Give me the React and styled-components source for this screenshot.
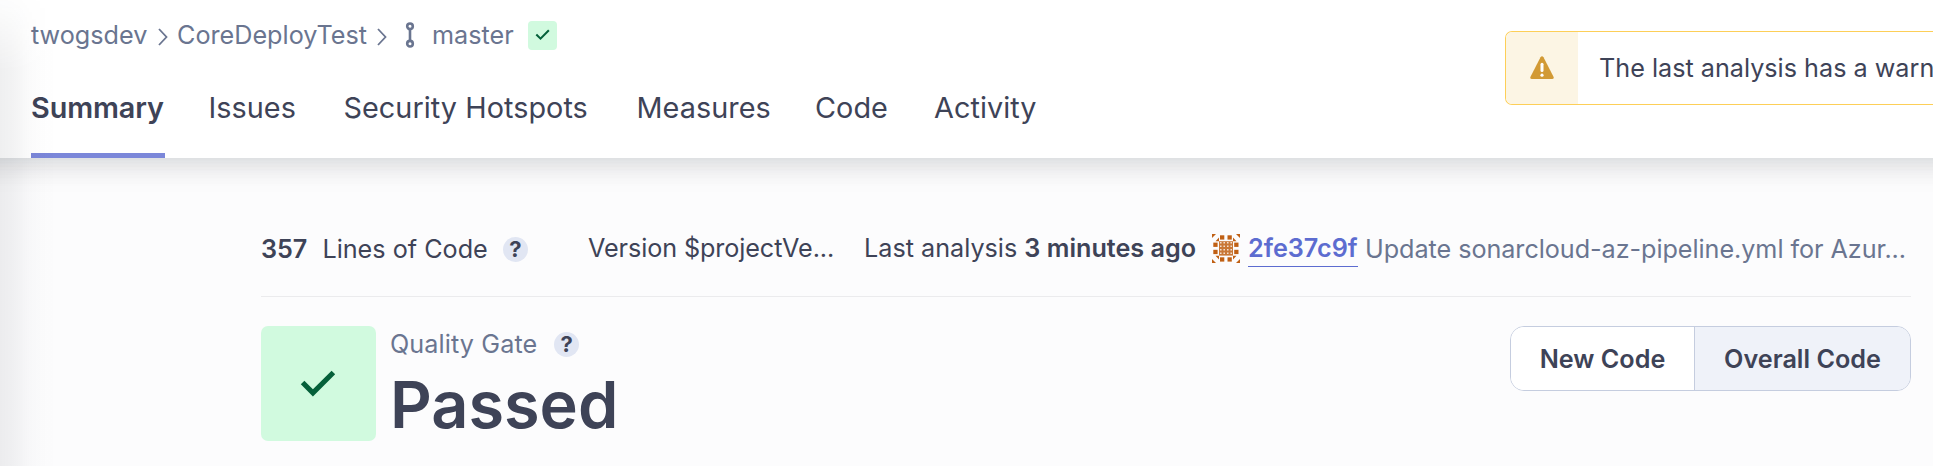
import React from 'react';
import styled, { createGlobalStyle } from 'styled-components';

const GlobalStyle = createGlobalStyle`
  *, *::before, *::after { box-sizing: border-box; }
  body {
    margin: 0;
    overflow: hidden;
    background: #fcfcfd;
    color: #3e4357;
    font-family: Inter, "Liberation Sans", sans-serif;
    font-size: 25.2px;
    font-weight: 370;
    line-height: 36px;
  }
`;

const Page = styled.div`
  position: relative;
  display: flex;
  flex-direction: column;
  width: 100%;
  height: 466px;
  overflow: hidden;
`;

const SidebarShadow = styled.div`
  position: absolute;
  top: 0;
  bottom: 0;
  left: 0;
  width: 60px;
  pointer-events: none;
  background: linear-gradient(to right, rgba(29, 33, 47, 0.07), rgba(29, 33, 47, 0.055) 22%, rgba(29, 33, 47, 0.02) 50%, rgba(29, 33, 47, 0.005) 78%, transparent);
  mask-image: linear-gradient(to bottom, rgba(0, 0, 0, 0.15), #000 70px);
`;

const Header = styled.header`
  position: relative;
  display: flex;
  justify-content: space-between;
  height: 158px;
  flex: none;
  margin: 0 -60px;
  padding: 0 60px 0 91px;
  background: #fff;
  box-shadow: 0 7px 36px rgba(29, 33, 47, 0.05), 0 4px 29px rgba(29, 33, 47, 0.05), 0 0 29px rgba(29, 33, 47, 0.12);
`;

const HeaderMain = styled.div`
  display: flex;
  flex-direction: column;
  justify-content: space-between;
`;

const Breadcrumbs = styled.nav`
  display: flex;
  align-items: center;
  height: 36px;
  margin-top: 17px;
  color: #6a7590;
`;

const Crumb = styled.span`
  width: ${(p) => p.$width}px;
  white-space: nowrap;
`;

const Separator = styled.svg`
  width: 10px;
  height: 18px;
  margin: 3px 9px 0 10px;
  flex: none;
`;

const BranchGlyph = styled.svg`
  width: 10px;
  height: 26px;
  margin: 0 17px 0 9px;
  flex: none;
`;

const StatusBox = styled.span`
  display: flex;
  align-items: center;
  justify-content: center;
  flex: none;
  width: ${(p) => p.$size}px;
  height: ${(p) => p.$size}px;
  border-radius: ${(p) => p.$radius}px;
  background: #d1fadf;
`;

const Tabs = styled.nav`
  display: flex;
  gap: 44px;
  font-size: 28.8px;
`;

const Tab = styled.a`
  width: ${(p) => p.$width}px;
  height: 76px;
  padding-top: 8px;
  border-bottom: 5px solid ${(p) => (p.$active ? '#7b87d9' : 'transparent')};
  font-weight: ${(p) => (p.$active ? 600 : 370)};
  letter-spacing: ${(p) => (p.$active ? '-0.1px' : '0.05px')};
  white-space: nowrap;
`;

const Banner = styled.div`
  display: flex;
  align-items: stretch;
  width: 428px;
  height: 74px;
  margin-top: 31px;
  border: 1px solid #fdcf58;
  border-right: 0;
  border-radius: 7px 0 0 7px;
  white-space: nowrap;
`;

const BannerIcon = styled.span`
  display: flex;
  flex: none;
  align-items: center;
  justify-content: center;
  width: 72px;
  border-radius: 6px 0 0 6px;
  background: #fcf5e4;
`;

const BannerText = styled.span`
  padding: 18px 0 0 21px;
`;

const Main = styled.main`
  width: 1650px;
  margin-left: 261px;
`;

const MetaRow = styled.div`
  display: flex;
  height: 139px;
  padding-top: 72px;
  border-bottom: 1px solid #ebebed;
  white-space: nowrap;
`;

const Bold = styled.strong`
  font-weight: 600;
`;

const LineCount = styled.div`
  display: flex;
  align-items: center;
  gap: 15px;
  width: 327px;
  height: 38px;
`;

const HelpDot = styled.span`
  display: flex;
  align-items: center;
  justify-content: center;
  width: 25px;
  height: 25px;
  margin-left: ${(p) => p.$offset || 0}px;
  border-radius: 50%;
  background: #e1e6f3;
  font-size: 22px;
  font-weight: 700;
  line-height: 25px;
`;

const Version = styled.span`
  width: 276px;
  letter-spacing: -0.1px;
`;

const Analysis = styled.span`
  width: 348px;
`;

const Avatar = styled.svg`
  width: 28px;
  height: 29px;
  margin: 4px 8px 0 0;
  flex: none;
`;

const Commit = styled.a`
  width: 110px;
  height: 37px;
  margin-right: 7px;
  border-bottom: 1px solid #5d6cd0;
  color: #5d6cd0;
  font-weight: 600;
`;

const CommitMessage = styled.span`
  padding-top: 1px;
  color: #6a7590;
  letter-spacing: -0.05px;
`;

const GateRow = styled.section`
  display: flex;
  align-items: flex-start;
  padding-top: 29px;
`;

const GateText = styled.div`
  display: flex;
  flex-direction: column;
  margin-left: 14px;
`;

const GateLabel = styled.div`
  display: flex;
  align-items: center;
  height: 36px;
  color: #6a7590;
  letter-spacing: 0.1px;
  ${HelpDot} { color: #3e4357; }
`;

const GateStatus = styled.strong`
  font-size: 64.8px;
  font-weight: 600;
  line-height: 86px;
`;

const Toggle = styled.div`
  display: flex;
  width: 401px;
  height: 65px;
  margin-left: auto;
  overflow: hidden;
  border: 1px solid #c5cddf;
  border-radius: 14px;
`;

const ToggleOption = styled.button`
  width: ${(p) => p.$width}px;
  padding: 0;
  border: 0;
  border-left: ${(p) => (p.$selected ? '1px solid #c5cddf' : '0')};
  background: ${(p) => (p.$selected ? '#eff2f9' : '#fff')};
  color: inherit;
  font: 600 25.2px Inter, "Liberation Sans", sans-serif;
`;

const Chevron = () => (
  <Separator viewBox="0 0 10 18" fill="none" stroke="#6a7590" strokeWidth="1.8">
    <path d="M1 1l7.5 8L1 17" />
  </Separator>
);

const Check = ({ size }) => (
  <svg width={size} height={size} viewBox="0 0 16 16" fill="#05603a">
    <path d="M11.73 4.06l1.06 1.06L6.2 11.7 2.61 8.1l1.06-1.06L6.2 9.56z" />
  </svg>
);

const PIXELS = [
  [8, 1.3], [15.5, 1.3], [8, 23.3], [15.5, 23.3],
  [1.3, 8.6], [22.2, 8.6], [1.3, 15.8], [22.2, 15.8],
];

const Identicon = () => (
  <Avatar viewBox="0 0 28 29" fill="#c06014">
    {PIXELS.map(([x, y]) => (
      <rect key={`${x}-${y}`} x={x} y={y} width="4.3" height="4.3" />
    ))}
    <path d="M0 0h4L0 4zM28 0v4l-4-4zM0 29v-4l4 4zM28 29h-4l4-4z" />
    <path d="M7 3.6v3.6H3.5zM21 3.6v3.6h3.5zM7 25.4v-3.6H3.5zM21 25.4v-3.6h3.5z" />
    <rect x="7" y="7.2" width="14" height="14.4" fillOpacity="0.85" />
    <path
      d="M8.8 8v13M12.2 8v13M15.8 8v13M19.2 8v13"
      stroke="#fff"
      strokeWidth="1.4"
      strokeDasharray="1.4 2.1"
      strokeOpacity="0.85"
    />
  </Avatar>
);

const TABS = [
  ['Summary', 133.5],
  ['Issues', 91],
  ['Security Hotspots', 249],
  ['Measures', 134.5],
  ['Code', 75],
  ['Activity', 103],
];

export default function App() {
  return (
    <Page>
      <GlobalStyle />
      <Header>
        <HeaderMain>
          <Breadcrumbs>
            <Crumb $width={117}>twogsdev</Crumb>
            <Chevron />
            <Crumb $width={190}>CoreDeployTest</Crumb>
            <Chevron />
            <BranchGlyph viewBox="0 0 10 26" fill="none" stroke="#6a7590" strokeWidth="2.6">
              <circle cx="5" cy="4.3" r="2.8" />
              <circle cx="5" cy="21.7" r="2.8" />
              <path d="M5 7v12" />
            </BranchGlyph>
            <Crumb $width={96}>master</Crumb>
            <StatusBox $size={29} $radius={4}><Check size={22} /></StatusBox>
          </Breadcrumbs>
          <Tabs>
            {TABS.map(([label, width], i) => (
              <Tab key={label} $width={width} $active={i === 0}>{label}</Tab>
            ))}
          </Tabs>
        </HeaderMain>
        <Banner>
          <BannerIcon>
            <svg width="24" height="24" viewBox="0 0 24 24">
              <path d="M10.5 1.2Q12-.7 13.5 1.2l10 19.5q.8 2.3-1.3 2.3H1.8Q-.3 23 .5 20.7z" fill="#d29a35" />
              <path d="M12 8.3v6.2" stroke="#fff" strokeWidth="3" strokeLinecap="round" />
              <circle cx="12" cy="19.2" r="1.6" fill="#fff" />
            </svg>
          </BannerIcon>
          <BannerText>The last analysis has a warn</BannerText>
        </Banner>
      </Header>
      <Main>
        <MetaRow>
          <LineCount>
            <Bold>357</Bold>
            <span>Lines of Code</span>
            <HelpDot>?</HelpDot>
          </LineCount>
          <Version>Version $projectVe...</Version>
          <Analysis>Last analysis <Bold>3 minutes ago</Bold></Analysis>
          <Identicon />
          <Commit>2fe37c9f</Commit>
          <CommitMessage>Update sonarcloud-az-pipeline.yml for Azur...</CommitMessage>
        </MetaRow>
        <GateRow>
          <StatusBox $size={115} $radius={7}><Check size={54} /></StatusBox>
          <GateText>
            <GateLabel>Quality Gate<HelpDot $offset={17}>?</HelpDot></GateLabel>
            <GateStatus>Passed</GateStatus>
          </GateText>
          <Toggle>
            <ToggleOption $width={183}>New Code</ToggleOption>
            <ToggleOption $width={216} $selected>Overall Code</ToggleOption>
          </Toggle>
        </GateRow>
      </Main>
      <SidebarShadow />
    </Page>
  );
}
